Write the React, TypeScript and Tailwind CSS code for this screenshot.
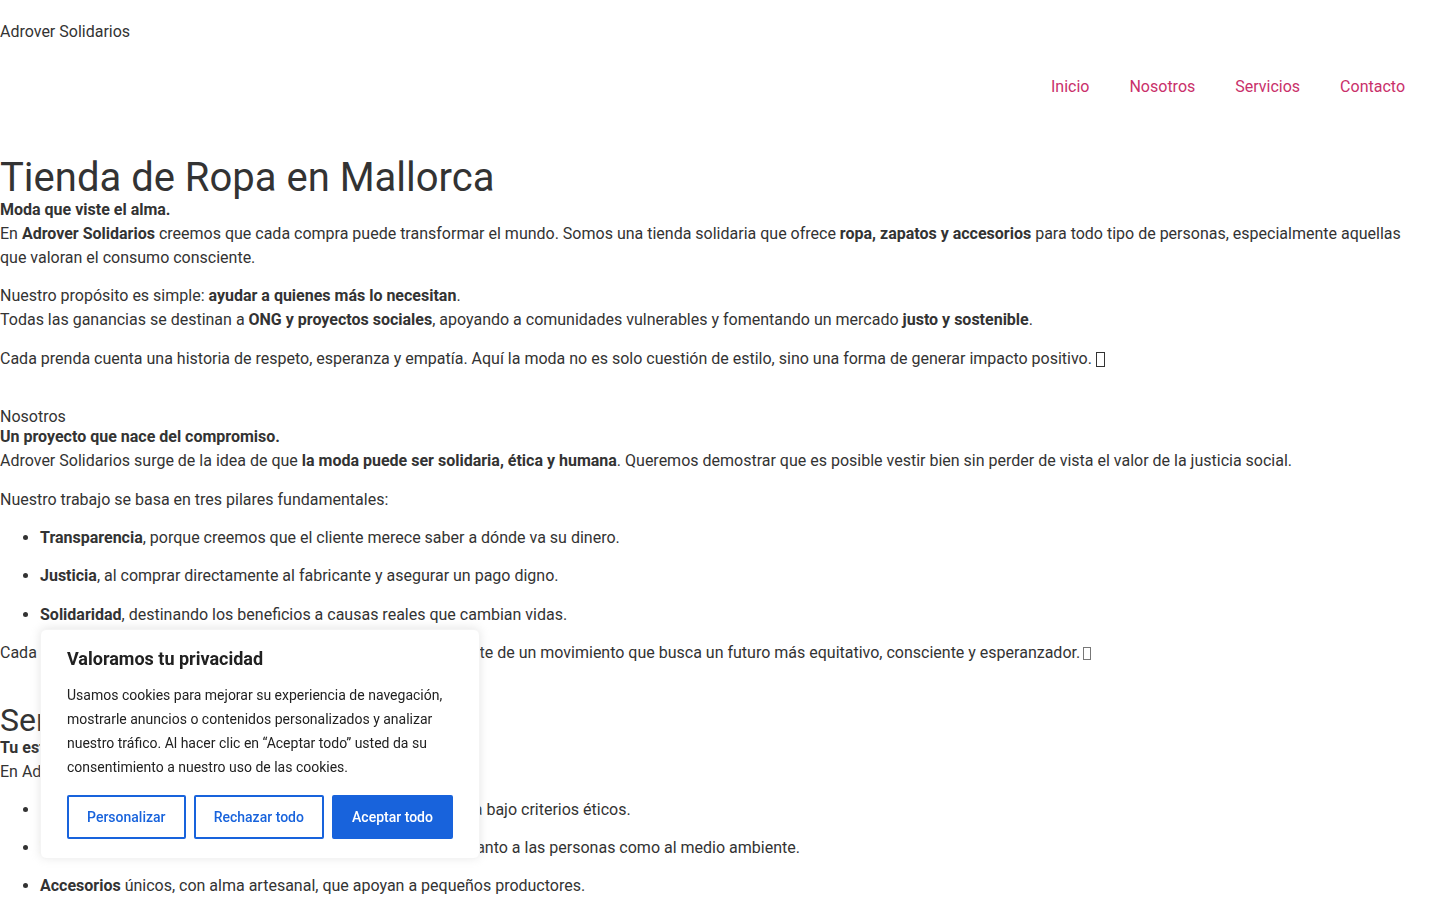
import React from "react";

function Tofu({ light }: { light?: boolean }) {
  return (
    <span
      className={
        light
          ? "inline-block w-[8px] h-[13px] border border-[#777] align-[-2px] ml-[3px]"
          : "inline-block w-[9px] h-[15px] border border-[#333] align-[-3px] ml-[4px]"
      }
    />
  );
}

export default function App() {
  const link = "px-5 text-[#c9306a]";
  return (
    <div className="h-screen overflow-y-scroll bg-white">
      <div className="w-[1425px] font-['Roboto',_'Liberation_Sans',_sans-serif] text-[#333] text-base leading-6">
        <header>
          <div className="pt-[20px]">Adrover Solidarios</div>
          <nav className="mt-[31px] flex justify-end">
            <a className={link} href="#inicio">Inicio</a>
            <a className={link} href="#nosotros">Nosotros</a>
            <a className={link} href="#servicios">Servicios</a>
            <a className={link} href="#contacto">Contacto</a>
          </nav>
        </header>

        <main className="mt-[58px] pb-[60px]">
          <section id="inicio">
            <h1 className="text-[40px] leading-[41px] font-normal">Tienda de Ropa en Mallorca</h1>
            <p className="font-bold">Moda que viste el alma.</p>
            <p>
              En <strong>Adrover Solidarios</strong> creemos que cada compra puede transformar el mundo. Somos una tienda solidaria que ofrece <strong>ropa, zapatos y accesorios</strong> para todo tipo de personas, especialmente aquellas que valoran el consumo consciente.
            </p>
            <p className="mt-[14px]">
              Nuestro propósito es simple: <strong>ayudar a quienes más lo necesitan</strong>.
              <br />
              Todas las ganancias se destinan a <strong>ONG y proyectos sociales</strong>, apoyando a comunidades vulnerables y fomentando un mercado <strong>justo y sostenible</strong>.
            </p>
            <p className="mt-[15px]">
              Cada prenda cuenta una historia de respeto, esperanza y empatía. Aquí la moda no es solo cuestión de estilo, sino una forma de generar impacto positivo.
              <Tofu />
            </p>
          </section>

          <section id="nosotros" className="mt-[38px]">
            <h2 className="leading-4 font-normal">Nosotros</h2>
            <p className="font-bold">Un proyecto que nace del compromiso.</p>
            <p>
              Adrover Solidarios surge de la idea de que <strong>la moda puede ser solidaria, ética y humana</strong>. Queremos demostrar que es posible vestir bien sin perder de vista el valor de la justicia social.
            </p>
            <p className="mt-[14.5px]">Nuestro trabajo se basa en tres pilares fundamentales:</p>
            <ul className="list-disc pl-10 mt-[14px] flex flex-col gap-[14.5px]">
              <li><strong>Transparencia</strong>, porque creemos que el cliente merece saber a dónde va su dinero.</li>
              <li><strong>Justicia</strong>, al comprar directamente al fabricante y asegurar un pago digno.</li>
              <li><strong>Solidaridad</strong>, destinando los beneficios a causas reales que cambian vidas.</li>
            </ul>
            <p className="mt-[14px]">
              Cada compra en Adrover Solidarios es la oportunidad de formar parte de un movimiento que busca un futuro más equitativo, consciente y esperanzador.
              <Tofu light />
            </p>
          </section>

          <section id="servicios" className="mt-[39px]">
            <h2 className="text-[32px] leading-[32px] font-normal">Servicios</h2>
            <p className="font-bold">Tu estilo, con propósito.</p>
            <p>En Adrover Solidarios encontrarás:</p>
            <ul className="list-disc pl-10 mt-[14.5px] flex flex-col gap-[14px]">
              <li><strong>Ropa</strong> de mujer, hombre y niños, cuidadosamente seleccionada bajo criterios éticos.</li>
              <li><strong>Zapatos</strong> cómodos y duraderos, fabricados con total respeto, tanto a las personas como al medio ambiente.</li>
              <li><strong>Accesorios</strong> únicos, con alma artesanal, que apoyan a pequeños productores.</li>
            </ul>
            <p className="mt-[14.5px]">
              Además, ofrecemos asesoramiento personalizado para que encuentres las prendas que mejor se adaptan a ti, y organizamos campañas solidarias a lo largo del año.
            </p>
            <p className="mt-[14.5px]">Cada artículo que eliges ayuda a financiar proyectos de inclusión, educación y apoyo a familias en situación de vulnerabilidad.</p>
          </section>

          <section id="colabora" className="mt-[38px]">
            <h2 className="text-[32px] leading-[38px] font-normal">Colabora</h2>
            <p className="font-bold">Súmate al cambio.</p>
            <p>Puedes colaborar donando prendas en buen estado, participando como voluntario o difundiendo nuestro proyecto entre tus amigos y familiares.</p>
            <p className="mt-[14.5px]">Cada gesto cuenta y nos acerca a una sociedad más justa y solidaria.</p>
          </section>

          <section id="contacto" className="mt-[38px]">
            <h2 className="text-[32px] leading-[38px] font-normal">Contacto</h2>
            <p className="font-bold">Estamos aquí para ayudarte.</p>
            <p>Si quieres conocer más sobre nuestros proyectos, colaborar con nosotros o visitar nuestra tienda, no dudes en escribirnos.</p>
            <ul className="list-disc pl-10 mt-[14.5px] flex flex-col gap-[14.5px]">
              <li><strong>Dirección</strong>: Palma de Mallorca, Illes Balears</li>
              <li><strong>Teléfono</strong>: +34 971 000 000</li>
              <li><strong>Correo electrónico</strong>: info@adroversolidarios.com</li>
              <li><strong>Horario</strong>: de lunes a sábado, de 10:00 a 20:00</li>
            </ul>
            <p className="mt-[14.5px]">Juntos podemos hacer que la moda sea una herramienta de cambio.</p>
            <p className="mt-[14.5px]">Síguenos en redes sociales para estar al día de nuestras novedades y campañas solidarias.</p>
          </section>

          <footer className="mt-[60px]">
            <p>© 2025 Adrover Solidarios</p>
            <p className="mt-[14.5px]">Aviso legal · Política de privacidad · Política de cookies</p>
          </footer>
        </main>
      </div>

      <div className="fixed left-10 bottom-[41px] w-[440px] bg-white border border-[#f4f4f4] rounded-md shadow-[0_-1px_10px_0_rgba(172,171,171,0.3)] pt-[17px] px-[26px] pb-[19px] text-[#212121] font-['Roboto',_'Liberation_Sans',_sans-serif]">
        <p className="text-[18px] leading-6 font-bold mb-3">Valoramos tu privacidad</p>
        <p className="text-sm leading-6">
          Usamos cookies para mejorar su experiencia de navegación, mostrarle anuncios o contenidos personalizados y analizar nuestro tráfico. Al hacer clic en “Aceptar todo” usted da su consentimiento a nuestro uso de las cookies.
        </p>
        <div className="mt-4 flex gap-2">
          <button className="flex-auto px-2 py-2 border-2 border-[#1863dc] rounded-[2px] text-[#1863dc] text-sm leading-6 font-medium bg-transparent">Personalizar</button>
          <button className="flex-auto px-2 py-2 border-2 border-[#1863dc] rounded-[2px] text-[#1863dc] text-sm leading-6 font-medium bg-transparent">Rechazar todo</button>
          <button className="flex-auto px-2 py-2 border-2 border-[#1863dc] rounded-[2px] text-white text-sm leading-6 font-medium bg-[#1863dc]">Aceptar todo</button>
        </div>
      </div>
    </div>
  );
}
